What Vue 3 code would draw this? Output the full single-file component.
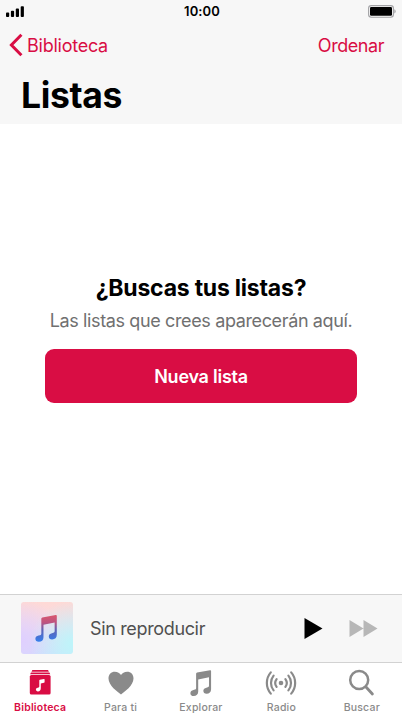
<template>
  <div class="screen">
    <header class="header">
      <div class="status-bar">
        <svg class="signal" viewBox="0 0 18 11" fill="#000">
          <rect x="0" y="6.6" width="3.2" height="4.4" rx="0.9"/>
          <rect x="4.9" y="4.8" width="3.2" height="6.2" rx="0.9"/>
          <rect x="9.8" y="2.6" width="3.2" height="8.4" rx="0.9"/>
          <rect x="14.7" y="0.2" width="3.2" height="10.8" rx="0.9"/>
        </svg>
        <span class="time">10:00</span>
        <svg class="battery" viewBox="0 0 28 13">
          <rect x="0.6" y="0.6" width="24.8" height="11.6" rx="2.7" fill="none" stroke="#a2a2a5" stroke-width="1.1"/>
          <rect x="2" y="2" width="22" height="8.8" rx="1.2" fill="#000"/>
          <path d="M26.3 4.3a2.3 2.3 0 0 1 0 4.2z" fill="#a2a2a5"/>
        </svg>
      </div>

      <nav class="nav-bar">
        <button class="nav-link">
          <svg class="back-icon" viewBox="0 0 14 24" fill="none" stroke="currentColor" stroke-width="3">
            <polyline points="12.4,1.8 2.4,12 12.4,22.2"/>
          </svg>
          <span class="back-text">Biblioteca</span>
        </button>
        <button class="nav-link sort">Ordenar</button>
      </nav>

      <h1 class="title">Listas</h1>
    </header>

    <main class="empty">
      <h2 class="empty-title">¿Buscas tus listas?</h2>
      <p class="empty-text">Las listas que crees aparecerán aquí.</p>
      <button class="new-btn">Nueva lista</button>
    </main>

    <section class="player">
      <div class="cover">
        <svg viewBox="0 0 24 30">
          <defs>
            <linearGradient id="note" gradientUnits="userSpaceOnUse" x1="0" y1="0" x2="0" y2="30">
              <stop offset="0" stop-color="#d9576e"/>
              <stop offset="0.28" stop-color="#bd5380"/>
              <stop offset="0.55" stop-color="#5f62b4"/>
              <stop offset="1" stop-color="#3480ef"/>
            </linearGradient>
          </defs>
          <path :d="notePath" fill="url(#note)"/>
        </svg>
      </div>
      <span class="track">Sin reproducir</span>
      <button class="control">
        <svg class="play" viewBox="0 0 18 21"><path d="M0 0L18 10.5L0 21z" fill="#000"/></svg>
      </button>
      <button class="control">
        <svg class="forward" viewBox="0 0 28 17"><path d="M0 0L14 8.5L0 17zM14 0L28 8.5L14 17z" fill="#b7b7b7"/></svg>
      </button>
    </section>

    <footer class="tab-bar">
      <button
        v-for="tab in tabs"
        :key="tab.id"
        @click="activeTab = tab.id"
        :class="['tab', { 'active': activeTab === tab.id }]"
      >
        <svg v-if="tab.id === 'library'" class="tab-icon" viewBox="0 0 32 28" fill="currentColor">
          <path d="M8.4 1h15.6l0.9 1.7H7.5zM7 3.5h18.4l0.9 1.7H6.1z"/>
          <rect x="5.8" y="6" width="20.8" height="19.6" rx="1.6"/>
          <path d="M15.3 11.6Q15.3 11 15.9 10.8L19.9 9.9Q20.6 9.8 20.6 10.4V13.1Q20.6 13.6 20 13.8L16.8 14.6V18.9C16.8 21 15.8 22.4 13.9 22.4C12.7 22.4 11.9 21.7 11.9 20.6C11.9 19.5 12.7 18.9 13.7 18.7L14.6 18.5Q15.3 18.3 15.3 17.6z" fill="#fff"/>
        </svg>
        <svg v-else-if="tab.id === 'foryou'" class="tab-icon" viewBox="0 0 32 28" fill="currentColor">
          <path d="M16 25.4C12.5 22.9 3.5 16.7 3.5 9.6C3.5 5.5 6.2 2.8 9.8 2.8C12.6 2.8 14.9 4.1 16 6C17.1 4.1 19.4 2.8 22.2 2.8C25.8 2.8 28.5 5.5 28.5 9.6C28.5 16.7 19.5 22.9 16 25.4z"/>
        </svg>
        <svg v-else-if="tab.id === 'browse'" class="tab-icon" viewBox="0 0 32 28" fill="currentColor">
          <path :d="notePath" transform="translate(5.2 1.1) scale(0.87 0.87)"/>
        </svg>
        <svg v-else-if="tab.id === 'radio'" class="tab-icon" viewBox="0 0 32 28" fill="none" stroke="currentColor" stroke-width="2.2" stroke-linecap="round">
          <circle cx="16" cy="14" r="2.3" fill="currentColor" stroke="none"/>
          <path d="M11.6 10.1a6.6 6.6 0 0 0 0 7.8M20.4 10.1a6.6 6.6 0 0 1 0 7.8"/>
          <path d="M8.6 6.6a11.8 11.8 0 0 0 0 14.8M23.4 6.6a11.8 11.8 0 0 1 0 14.8"/>
          <path d="M5.8 3.4a16.2 16.2 0 0 0 0 21.2M26.2 3.4a16.2 16.2 0 0 1 0 21.2"/>
        </svg>
        <svg v-else class="tab-icon" viewBox="0 0 32 28" fill="none" stroke="currentColor">
          <circle cx="13.2" cy="11.1" r="9" stroke-width="2.5"/>
          <path d="M20 18L26.4 25" stroke-width="2.8" stroke-linecap="round"/>
        </svg>
        <span class="tab-label">{{ tab.label }}</span>
      </button>
    </footer>
  </div>
</template>

<script setup>
import { ref } from 'vue'

const activeTab = ref('library')

const tabs = [
  { id: 'library', label: 'Biblioteca' },
  { id: 'foryou', label: 'Para ti' },
  { id: 'browse', label: 'Explorar' },
  { id: 'radio', label: 'Radio' },
  { id: 'search', label: 'Buscar' }
]

// Nota musical, compartida por la carátula y la pestaña Explorar
const notePath = 'M6.8 4.2Q6.8 3.2 7.9 2.9L22.8 0.1Q24 -0.1 24 1V22C24 25.2 22 27.2 18.8 27.2C16.5 27.2 15.1 25.8 15.1 23.8C15.1 21.8 16.5 20.6 18.6 20.2L20.2 19.8Q21.6 19.5 21.6 18.1V8.2L9.2 10.8V24.6C9.2 27.8 7.1 29.8 4 29.8C1.6 29.8 0.2 28.4 0.2 26.5C0.2 24.4 1.7 23.2 3.7 22.8L5.4 22.4Q6.8 22.1 6.8 20.8z'
</script>

<style>
body {
  margin: 0;
  background: #fff;
}
</style>

<style scoped>
.screen {
  display: flex;
  flex-direction: column;
  width: 402px;
  height: 715px;
  overflow: hidden;
  background: #fff;
  font-family: Inter, "Liberation Sans", sans-serif;
  color: #000;
}

button {
  padding: 0;
  border: none;
  background: none;
  font: inherit;
  cursor: pointer;
}

h1,
h2,
p {
  margin: 0;
  white-space: nowrap;
}

.header {
  height: 124px;
  background: #f7f7f7;
}

.status-bar {
  display: grid;
  grid-template-columns: 1fr auto 1fr;
  align-items: center;
  height: 22px;
  padding: 0 6px;
}

.signal {
  width: 18px;
  height: 11px;
}

.time {
  padding-left: 2px;
  font-size: 13px;
  font-weight: 600;
  letter-spacing: 0.1px;
}

.battery {
  width: 28px;
  height: 13px;
  justify-self: end;
}

.nav-bar {
  display: flex;
  align-items: center;
  justify-content: space-between;
  height: 46px;
  padding: 0 18px 0 9px;
}

.nav-link {
  display: flex;
  align-items: center;
  gap: 4px;
  color: #d90d44;
  font-size: 18px;
  letter-spacing: -0.45px;
}

.back-text {
  letter-spacing: -0.25px;
}

.back-icon {
  width: 14px;
  height: 24px;
}

.title {
  padding-left: 21px;
  font-size: 35.5px;
  font-weight: 700;
  line-height: 55px;
  letter-spacing: -0.35px;
}

.empty {
  display: flex;
  flex: 1;
  flex-direction: column;
  align-items: center;
  padding-top: 149px;
}

.empty-title {
  font-size: 23px;
  font-weight: 700;
  line-height: 30px;
  letter-spacing: -0.22px;
}

.empty-text {
  margin-top: 3px;
  color: #707070;
  font-size: 18px;
  line-height: 29px;
  letter-spacing: -0.37px;
}

.new-btn {
  width: 312px;
  height: 54px;
  margin-top: 14px;
  border-radius: 9px;
  background: #d90d44;
  color: #fff;
  font-size: 18px;
  font-weight: 600;
  letter-spacing: -0.25px;
}

.player {
  display: flex;
  align-items: center;
  height: 67px;
  padding: 0 24px 0 21px;
  border-top: 1px solid #d2d2d2;
  background: #f7f7f7;
}

.cover {
  display: flex;
  align-items: center;
  justify-content: center;
  box-sizing: border-box;
  width: 52px;
  height: 52px;
  margin-bottom: 1px;
  padding-right: 3px;
  border-radius: 3px;
  background:
    radial-gradient(circle at 100% 80%, #bdf5fa 0%, rgba(189, 245, 250, 0) 65%),
    radial-gradient(circle at 0% 75%, #dfcfff 0%, rgba(223, 207, 255, 0) 65%),
    linear-gradient(180deg, #ffd9d5 0%, #f3dcea 50%, #cfe0fc 100%);
}

.cover svg {
  width: 22px;
  height: 27px;
}

.track {
  flex: 1;
  margin-left: 17px;
  color: #505050;
  font-size: 18px;
  letter-spacing: -0.35px;
}

.control {
  display: flex;
  margin-left: 26px;
}

.play {
  width: 19px;
  height: 21px;
}

.forward {
  width: 29px;
  height: 17px;
}

.tab-bar {
  display: grid;
  grid-template-columns: repeat(5, 1fr);
  height: 52px;
  border-top: 1px solid #d2d2d2;
  background: #fff;
}

.tab {
  display: flex;
  flex-direction: column;
  align-items: center;
  justify-content: flex-start;
  padding-top: 6px;
  color: #8a8a8a;
}

.tab.active {
  color: #d90d44;
}

.tab-icon {
  width: 32px;
  height: 28px;
}

.tab-label {
  margin-top: 4px;
  font-size: 10.5px;
  font-weight: 500;
  line-height: 14px;
  letter-spacing: 0.2px;
}

.tab.active .tab-label {
  font-weight: 600;
}
</style>
